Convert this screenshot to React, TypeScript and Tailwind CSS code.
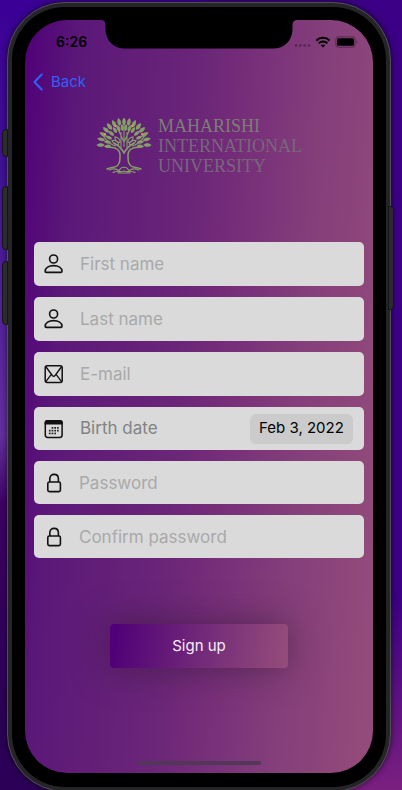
import { useState } from "react";
import type { ReactNode } from "react";

const LEAF = "M0 0C2.3 -1.8 2.3 -5 0 -7.6C-2.3 -5 -2.3 -1.8 0 0Z";

const outerLeaves = [-90, -76, -63, -50, -38, -25, -12, 0, 12, 25, 38, 50, 63, 76, 90];
const middleLeaves = [-98, -83, -67, -50, -33, -19, -6, 6, 19, 33, 50, 67, 83, 98];
const innerLeaves = [-62, -42, 42, 62];

function TreeLogo() {
  const green = "#84a065";
  return (
    <svg viewBox="0 0 56 56" className="size-14 shrink-0" fill="none" aria-hidden="true">
      <g fill={green}>
        {outerLeaves.map((angle) => (
          <path key={angle} d={LEAF} transform={`translate(28 27) rotate(${angle}) translate(0 -19.4) scale(1.08)`} />
        ))}
        {middleLeaves.map((angle) => (
          <path key={angle} d={LEAF} transform={`translate(28 26) rotate(${angle}) translate(0 -13) scale(.95)`} />
        ))}
      </g>
      <g stroke={green} strokeWidth="1.1">
        {innerLeaves.map((angle) => (
          <path key={angle} d={LEAF} transform={`translate(28 29) rotate(${angle}) translate(0 -6)`} />
        ))}
        <path d="M28 29V4M28 24L20 7M28 24L36 7M25 31V14M31 31V14M20 28C13 26 9 22 6 15M36 28C43 26 47 22 50 15" />
      </g>
      <g stroke={green} strokeWidth="1.5" strokeLinecap="round">
        <path d="M11 29C20 29 24 32 24 37C24 43 24 45 21 48C18 50 15 49 11 51M45 29C36 29 32 32 32 37C32 43 32 45 35 48C38 50 41 49 45 51" />
        <path d="M18 25C23 28 26 31 28 35C30 31 33 28 38 25" />
        <path d="M13 52C18 50 21 51 23 53C25 48 31 48 33 53C35 51 38 50 43 52M17 54.500C21 52 24 55 28 53C32 55 35 52 39 54.500M22 55H34" strokeWidth="1.2" />
      </g>
      <g fill="#e39a4d">
        <circle cx="19.500" cy="8" r="1.1" />
        <circle cx="36" cy="8" r="1.1" />
        <circle cx="9" cy="16" r="1.1" />
        <circle cx="46" cy="16" r="1.1" />
      </g>
    </svg>
  );
}

function PersonIcon() {
  return (
    <svg viewBox="0 0 20 20" className="size-5" fill="none" stroke="#111" strokeWidth="1.6" aria-hidden="true">
      <circle cx="9.600" cy="5" r="4" />
      <path d="M1.200 17.200C1.200 13.800 4.800 11.600 9.600 11.600S18 13.800 18 17.200C18 18.100 17.600 18.400 16.700 18.400H2.500C1.600 18.400 1.200 18.100 1.200 17.200Z" />
    </svg>
  );
}

function MailIcon() {
  return (
    <svg viewBox="0 0 20 20" className="size-5" fill="none" stroke="#111" strokeWidth="1.5" aria-hidden="true">
      <rect x="1.2" y="1.8" width="17" height="16.6" rx="2" />
      <path d="M1.700 2.500L8.300 11.500Q9.700 13 11.100 11.500L17.700 2.500M1.700 17.800L7.300 10.400M17.700 17.800L12.100 10.400" strokeWidth="1.3" />
    </svg>
  );
}

const calendarDots = [
  [8, 9], [10.7, 9], [13.4, 9],
  [5.3, 11.8], [8, 11.8], [10.7, 11.8], [13.4, 11.8],
  [5.3, 14.6], [8, 14.6], [10.7, 14.6],
];

function CalendarIcon() {
  return (
    <svg viewBox="0 0 20 20" className="size-5" fill="none" aria-hidden="true">
      <rect x="1.3" y="1.7" width="16.8" height="16.8" rx="2.4" stroke="#111" strokeWidth="1.5" />
      <path d="M.6 5.500V4Q.6 1 3.600 1H15.800Q18.800 1 18.800 4V5.500Z" fill="#111" />
      {calendarDots.map(([x, y]) => (
        <rect key={`${x}-${y}`} x={x - 0.4} y={y - 1} width="1.7" height="1.7" fill="#222" />
      ))}
    </svg>
  );
}

function LockIcon() {
  return (
    <svg viewBox="0 0 20 20" className="size-5" fill="none" stroke="#111" strokeWidth="1.6" aria-hidden="true">
      <rect x="3.800" y="9" width="12.6" height="9.6" rx="1.5" />
      <path d="M5.800 9V5.800C5.800 3 7.600 1.400 10.100 1.400S14.400 3 14.400 5.800V9" />
    </svg>
  );
}

type FieldProps = {
  id: string;
  label: string;
  type: string;
  icon: ReactNode;
  compact?: boolean;
};

function Field({ id, label, type, icon, compact }: FieldProps) {
  return (
    <div
      className={`flex items-center rounded-[5px] bg-[#dadada] pl-[10px] pr-3 ${
        compact ? "h-[43px] gap-[15px]" : "h-11 gap-4"
      }`}
    >
      <label htmlFor={id}>{icon}</label>
      <input
        id={id}
        type={type}
        placeholder={label}
        aria-label={label}
        className="h-full min-w-0 flex-1 bg-transparent text-[17px] text-black outline-none placeholder:text-[#a9a9aa]"
      />
    </div>
  );
}

function StatusBar() {
  return (
    <div className="flex h-11 items-center justify-between pl-[31px] pr-[15px] text-black">
      <span className="text-sm font-semibold">6:26</span>
      <div className="flex items-center gap-1">
        <svg viewBox="0 0 18 12" className="h-3 w-[18px]" fill="#000" fillOpacity=".3" aria-hidden="true">
          <circle cx="3" cy="9.5" r="1.4" />
          <circle cx="7.3" cy="9.5" r="1.4" />
          <circle cx="11.6" cy="9.5" r="1.4" />
          <circle cx="15.9" cy="9.5" r="1.4" />
        </svg>
        <svg viewBox="0 0 16 12" className="h-3 w-4" fill="none" stroke="#000" strokeWidth="2" aria-hidden="true">
          <path d="M1.300 4.500C5 .9 11 .9 14.700 4.500M3.600 7.200C6.100 4.800 9.900 4.800 12.400 7.200" />
          <path d="M5.700 9.300C7 8.100 9 8.100 10.300 9.300L8 11.600Z" fill="#000" stroke="none" />
        </svg>
        <svg viewBox="0 0 23 12" className="h-3 w-[23px]" aria-hidden="true">
          <rect x=".8" y=".9" width="19.4" height="10.2" rx="2.8" fill="none" stroke="#000" strokeOpacity=".3" strokeWidth="1.1" />
          <rect x="2" y="2.2" width="17" height="7.6" rx="1.5" fill="#000" />
          <path d="M21.300 4.200C22.900 4.800 22.900 7.200 21.300 7.800Z" fill="#000" fillOpacity=".3" />
        </svg>
      </div>
    </div>
  );
}

function SideButtons() {
  const shape = "absolute w-[6px] border border-[#151515] bg-[#2c2c2e]";
  return (
    <>
      <span className={`${shape} -left-[6px] top-[126px] h-7 rounded-l-sm`} />
      <span className={`${shape} -left-[6px] top-[183px] h-16 rounded-l-sm`} />
      <span className={`${shape} -left-[6px] top-[258px] h-16 rounded-l-sm`} />
      <span className={`${shape} -right-[4px] top-[203px] h-[104px] rounded-r-sm`} />
    </>
  );
}

export default function App() {
  const [birthDate] = useState("Feb 3, 2022");

  return (
    <div className="min-h-screen overflow-hidden bg-[linear-gradient(180deg,#3b0096_0%,#401297_22%,#6430a0_55%,#3d0064_64%,#2b0056_92%,#2b0056_100%)] font-['Inter','Liberation_Sans',sans-serif]">
      <div className="bg-[linear-gradient(90deg,transparent_50%,#3b0085_51%)]">
        <div className="bg-[linear-gradient(180deg,transparent_0%,transparent_75%,#7b2080_100%)] bg-[length:50%_100%] bg-right bg-no-repeat pl-[7px] pr-[11px] pt-[2px]">
          <div className="relative rounded-[58px] border border-[#505054] bg-[#252527] p-1 shadow-[0_0_6px_rgba(0,0,0,0.6)]">
            <SideButtons />
            <div className="rounded-[53px] bg-black px-[13px] pb-[14px] pt-[13px]">
              <main className="relative rounded-[42px] bg-[linear-gradient(94deg,#500078_0%,#5b1878_14%,#6b2678_45%,#732b79_53%,#853f7a_76%,#934b7b_97%)] pb-2">
                <svg viewBox="0 0 198 29" className="absolute inset-x-0 top-0 mx-auto h-[29px] w-[198px]" aria-hidden="true">
                  <path d="M0 0C4 0 5.500 1.500 5.500 6V9C5.500 21 14 28.500 25 28.500H173C184 28.500 192.500 21 192.500 9V6C192.500 1.500 194 0 198 0Z" fill="#000" />
                </svg>
                <StatusBar />
                <nav className="flex h-9 items-center pl-2">
                  <a href="#back" className="flex items-center gap-2 text-[15px] text-[#2c62fa]">
                    <svg viewBox="0 0 10 18" className="h-[18px] w-[10px]" fill="none" stroke="currentColor" strokeWidth="2.1" strokeLinecap="round" strokeLinejoin="round" aria-hidden="true">
                      <path d="M8.700 1.500L1.500 9L8.700 16.500" />
                    </svg>
                    Back
                  </a>
                </nav>

                <header className="mt-4 flex h-[60px] items-center justify-center gap-[6px]">
                  <TreeLogo />
                  <h1 className="font-['Liberation_Serif',serif] text-lg leading-5 text-[#76687a]">
                    <span className="block text-[#7c7e77]">MAHARISHI</span>
                    <span className="block">INTERNATIONAL</span>
                    <span className="block">UNIVERSITY</span>
                  </h1>
                </header>

                <form className="mt-[66px]" onSubmit={(event) => event.preventDefault()}>
                  <div className="flex flex-col gap-[11px] px-[9px]">
                    <Field id="first-name" label="First name" type="text" icon={<PersonIcon />} />
                    <Field id="last-name" label="Last name" type="text" icon={<PersonIcon />} />
                    <Field id="email" label="E-mail" type="email" icon={<MailIcon />} />
                    <div className="flex h-[43px] items-center gap-4 rounded-[5px] bg-[#dadada] pl-[10px] pr-[11px]">
                      <CalendarIcon />
                      <label htmlFor="birth-date" className="flex-1 text-[17px] text-[#828284]">Birth date</label>
                      <button id="birth-date" type="button" className="h-[30px] w-[103px] rounded-md bg-[#cbcbcc] text-[15px] whitespace-nowrap text-black">
                        {birthDate}
                      </button>
                    </div>
                    <Field id="password" label="Password" type="password" icon={<LockIcon />} compact />
                    <Field id="confirm-password" label="Confirm password" type="password" icon={<LockIcon />} compact />
                  </div>
                  <button
                    type="submit"
                    className="mx-auto mt-[66px] block h-11 w-[178px] rounded bg-[linear-gradient(97deg,#500078_3%,#732b79_53%,#934b7b_97%)] text-[15px] text-[#f4eef6] shadow-[0_0_36px_rgba(40,20,40,0.5)]"
                  >
                    Sign up
                  </button>
                </form>
                <div className="mx-auto mt-[93px] h-1 w-[123px] rounded-full bg-[#533758]" />
              </main>
            </div>
          </div>
        </div>
      </div>
    </div>
  );
}
